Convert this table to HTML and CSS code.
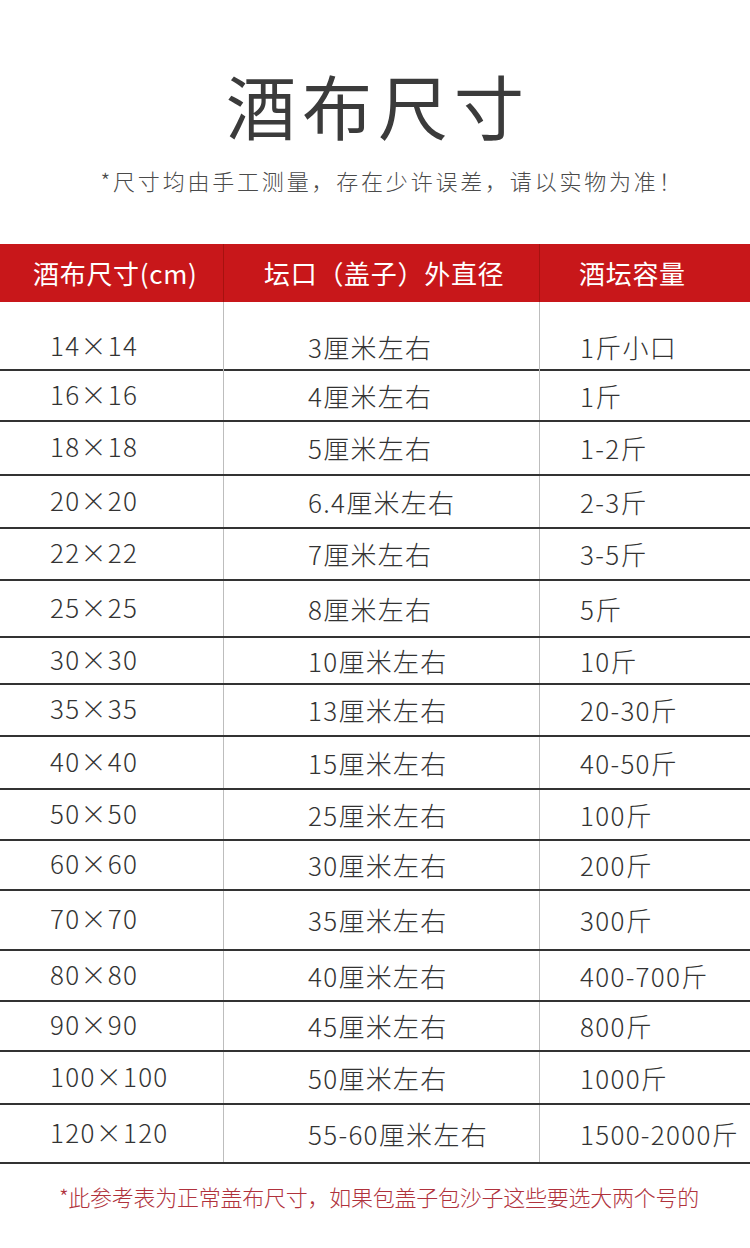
FILE: index.html
```html
<!DOCTYPE html>
<html lang="zh-CN">
<head>
<meta charset="utf-8">
<title>酒布尺寸</title>
<link rel="stylesheet" href="styles.css">
</head>
<body>
<div class="page">
  <h1 class="title">酒布尺寸</h1>
  <p class="subtitle">*尺寸均由手工测量，存在少许误差，请以实物为准！</p>
  <div class="table">
    <div class="row head">
      <div class="cell c1">酒布尺寸(cm)</div>
      <div class="cell c2">坛口（盖子）外直径</div>
      <div class="cell c3">酒坛容量</div>
    </div>
    <div class="row r1"><div class="cell c1">14×14</div><div class="cell c2">3厘米左右</div><div class="cell c3">1斤小口</div></div>
    <div class="row r2"><div class="cell c1">16×16</div><div class="cell c2">4厘米左右</div><div class="cell c3">1斤</div></div>
    <div class="row r3"><div class="cell c1">18×18</div><div class="cell c2">5厘米左右</div><div class="cell c3">1-2斤</div></div>
    <div class="row r4"><div class="cell c1">20×20</div><div class="cell c2">6.4厘米左右</div><div class="cell c3">2-3斤</div></div>
    <div class="row r5"><div class="cell c1">22×22</div><div class="cell c2">7厘米左右</div><div class="cell c3">3-5斤</div></div>
    <div class="row r6"><div class="cell c1">25×25</div><div class="cell c2">8厘米左右</div><div class="cell c3">5斤</div></div>
    <div class="row r7"><div class="cell c1">30×30</div><div class="cell c2">10厘米左右</div><div class="cell c3">10斤</div></div>
    <div class="row r8"><div class="cell c1">35×35</div><div class="cell c2">13厘米左右</div><div class="cell c3">20-30斤</div></div>
    <div class="row r9"><div class="cell c1">40×40</div><div class="cell c2">15厘米左右</div><div class="cell c3">40-50斤</div></div>
    <div class="row r10"><div class="cell c1">50×50</div><div class="cell c2">25厘米左右</div><div class="cell c3">100斤</div></div>
    <div class="row r11"><div class="cell c1">60×60</div><div class="cell c2">30厘米左右</div><div class="cell c3">200斤</div></div>
    <div class="row r12"><div class="cell c1">70×70</div><div class="cell c2">35厘米左右</div><div class="cell c3">300斤</div></div>
    <div class="row r13"><div class="cell c1">80×80</div><div class="cell c2">40厘米左右</div><div class="cell c3">400-700斤</div></div>
    <div class="row r14"><div class="cell c1">90×90</div><div class="cell c2">45厘米左右</div><div class="cell c3">800斤</div></div>
    <div class="row r15"><div class="cell c1">100×100</div><div class="cell c2">50厘米左右</div><div class="cell c3">1000斤</div></div>
    <div class="row r16"><div class="cell c1">120×120</div><div class="cell c2">55-60厘米左右</div><div class="cell c3">1500-2000斤</div></div>
  </div>
  <p class="note">*此参考表为正常盖布尺寸，如果包盖子包沙子这些要选大两个号的</p>
</div>
</body>
</html>
```
FILE: styles.css
```css
html, body {
  margin: 0;
  padding: 0;
  background: #ffffff;
}
body {
  font-family: "Noto Sans CJK SC", "Noto Sans", sans-serif;
  color: #333333;
}
.page {
  width: 750px;
  height: 1248px;
  overflow: hidden;
}
.title {
  margin: 0;
  padding: 62px 0 0 6px;
  height: 86px;
  font-size: 70px;
  line-height: 86px;
  font-weight: 400;
  letter-spacing: 6px;
  text-align: center;
  color: #3b3b3b;
}
.subtitle {
  margin: 0;
  padding: 17px 0 0 34px;
  height: 79px;
  font-size: 22px;
  line-height: 30px;
  font-weight: 300;
  letter-spacing: 2.8px;
  text-align: center;
  color: #4a4a4a;
}
.table {
  display: flex;
  flex-direction: column;
}
.row {
  display: grid;
  grid-template-columns: 223px 316px 211px;
  border-bottom: 2px solid #333333;
  box-sizing: border-box;
  font-size: 26px;
  font-weight: 300;
  color: #333333;
}
.cell {
  display: flex;
  align-items: center;
  white-space: nowrap;
  letter-spacing: 1.3px;
}
.c1 { padding-left: 50px; padding-bottom: 5px; }
.c2, .c3 {
  border-left: 1px solid #bdbdbd;
  padding-bottom: 1px;
}
.c2 { padding-left: 84px; }
.c3 { padding-left: 40px; }

.head {
  height: 58px;
  background: #c8171a;
  border-bottom: none;
  color: #ffffff;
  font-weight: 400;
}
.head .cell {
  padding-bottom: 1px;
  letter-spacing: 0.7px;
}
.head .c2, .head .c3 {
  border-left: 1px solid #a6120f;
}
.head .c1 { padding-left: 33px; }
.head .c2 { padding-left: 40px; }
.head .c3 { padding-left: 39px; }

.r1 { height: 69px; }
.r1 .cell { padding-top: 24px; }
.r1 .c1 { padding-bottom: 8px; }
.r1 .c2, .r1 .c3 { padding-bottom: 4px; }
.r2 { height: 51px; }
.r3 { height: 54px; }
.r4 { height: 53px; }
.r5 { height: 52px; }
.r6 { height: 57px; }
.r7 { height: 47px; }
.r8 { height: 52px; }
.r9 { height: 53px; }
.r10 { height: 51px; }
.r11 { height: 50px; }
.r12 { height: 60px; }
.r13 { height: 51px; }
.r14 { height: 50px; }
.r15 { height: 53px; }
.r16 { height: 59px; }

.note {
  margin: 0;
  padding: 17px 0 0 8px;
  font-size: 22px;
  line-height: 30px;
  font-weight: 300;
  letter-spacing: -0.25px;
  text-align: center;
  color: #b0323c;
}
```
